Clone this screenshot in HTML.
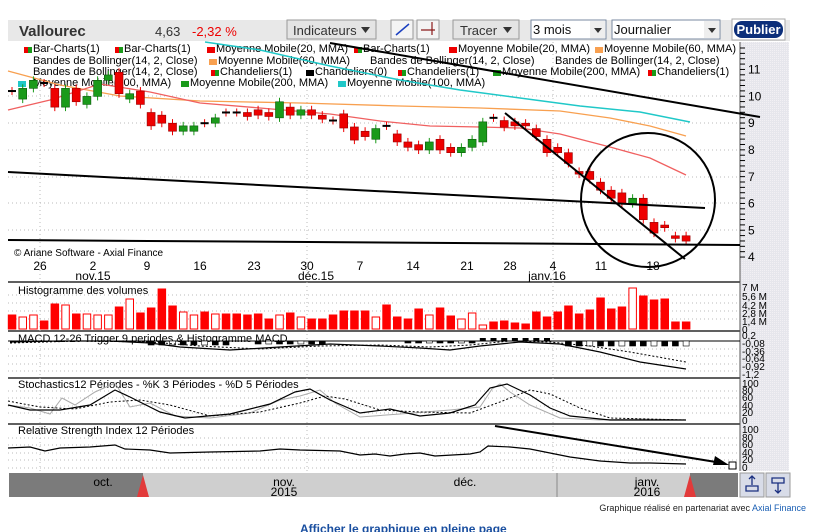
<!DOCTYPE html>
<html><head><meta charset="utf-8"><style>
html,body{margin:0;padding:0;background:#fff;width:822px;height:532px;overflow:hidden;font-family:"Liberation Sans",sans-serif}
svg{position:absolute;left:0;top:0}
</style></head><body>
<svg width="822" height="532" viewBox="0 0 822 532" font-family="Liberation Sans, sans-serif">
<defs>
<pattern id="dith" width="2" height="2" patternUnits="userSpaceOnUse"><rect width="2" height="2" fill="#e6e6ec"/><rect width="1" height="1" fill="#f2f0f4"/></pattern>
</defs>
<rect x="8" y="20" width="782" height="21" fill="#e8e8e8"/>
<text x="19" y="36" font-size="15" font-weight="bold" fill="#333">Vallourec</text>
<text x="155" y="36" font-size="13" fill="#333">4,63</text>
<text x="192" y="36" font-size="13" fill="#e00">-2,32 %</text>
<rect x="287" y="20" width="89" height="19" fill="#e4e4e4" stroke="#999"/>
<text x="293" y="35" font-size="13" fill="#333">Indicateurs</text>
<path d="M361 27h9l-4.5 6z" fill="#333"/>
<rect x="391" y="20" width="22" height="19" fill="#f4f4f4" stroke="#999"/>
<path d="M396 35l13-11" stroke="#1a3fc0" stroke-width="1.5"/>
<rect x="417" y="20" width="22" height="19" fill="#f4f4f4" stroke="#999"/>
<path d="M421 30h14M432 22v13" stroke="#8b1a1a" stroke-width="1.2"/>
<rect x="453" y="20" width="66" height="19" fill="#e4e4e4" stroke="#999"/>
<text x="460" y="35" font-size="13" fill="#333">Tracer</text>
<path d="M503 27h9l-4.5 6z" fill="#333"/>
<rect x="531" y="20" width="75" height="19" fill="#fff" stroke="#7a8aa0"/>
<text x="533" y="34" font-size="13" fill="#111">3 mois</text>
<rect x="590" y="21" width="15" height="17" fill="#eee"/>
<path d="M594 28h8l-4 5z" fill="#333"/>
<rect x="612" y="20" width="108" height="19" fill="#fff" stroke="#7a8aa0"/>
<text x="614" y="34" font-size="13" fill="#111">Journalier</text>
<rect x="704" y="21" width="15" height="17" fill="#eee"/>
<path d="M708 28h8l-4 5z" fill="#333"/>
<rect x="732" y="19" width="53" height="21" fill="#fff" stroke="#aaa"/>
<rect x="734" y="21" width="49" height="17" rx="8" fill="#0c2f7a"/>
<text x="758.5" y="34" font-size="13" font-weight="bold" fill="#fff" text-anchor="middle">Publier</text>

<rect x="740" y="42" width="49" height="429" fill="url(#dith)"/>
<g stroke="#000" stroke-width="1.3">
<line x1="8" y1="282" x2="740" y2="282"/>
<line x1="8" y1="331" x2="740" y2="331"/>
<line x1="8" y1="378" x2="740" y2="378"/>
<line x1="8" y1="424" x2="740" y2="424"/>
</g>
<line x1="740" y1="42" x2="740" y2="471" stroke="#555"/>
<g id="grid" stroke="#bbb" stroke-dasharray="1 3"></g>

<g font-size="11" fill="#000">
<text x="33" y="52">Bar-Charts(1)</text><text x="124" y="52">Bar-Charts(1)</text><text x="216" y="52">Moyenne Mobile(20, MMA)</text><text x="363" y="52">Bar-Charts(1)</text><text x="458" y="52">Moyenne Mobile(20, MMA)</text><text x="604" y="52">Moyenne Mobile(60, MMA)</text>
<text x="33" y="64">Bandes de Bollinger(14, 2, Close)</text><text x="218" y="64">Moyenne Mobile(60, MMA)</text><text x="370" y="64">Bandes de Bollinger(14, 2, Close)</text><text x="555" y="64">Bandes de Bollinger(14, 2, Close)</text>
<text x="33" y="75">Bandes de Bollinger(14, 2, Close)</text><text x="220" y="75">Chandeliers(1)</text><text x="315" y="75">Chandeliers(0)</text><text x="407" y="75">Chandeliers(1)</text><text x="502" y="75">Moyenne Mobile(200, MMA)</text><text x="657" y="75">Chandeliers(1)</text>
<text x="33" y="86">Moyenne Mobile(100, MMA)</text><text x="190" y="86">Moyenne Mobile(200, MMA)</text><text x="347" y="86">Moyenne Mobile(100, MMA)</text>
</g>
<g id="legsw"></g>

<polyline fill="none" stroke="#20c8c8" stroke-width="1.5" points="205,42 260,50 330,66 400,80 460,90 520,98 580,106 640,112 690,122"/>
<polyline fill="none" stroke="#f8a050" stroke-width="1.3" points="8,71 60,85 120,96 200,101 300,103 400,106 480,108 560,111 610,118 650,126 686,136"/>
<polyline fill="none" stroke="#f06060" stroke-width="1.3" points="8,110 50,100 100,84 150,92 200,103 260,108 330,114 380,121 430,126 480,127 520,128 560,134 610,147 650,158 686,175"/>
<g id="candles"></g>
<g stroke="#000" stroke-width="2" fill="none">
<line x1="330" y1="43" x2="760" y2="117"/>
<line x1="8" y1="172" x2="705" y2="208"/>
<line x1="8" y1="240" x2="740" y2="245"/>
<line x1="505" y1="113" x2="685" y2="259"/>
<circle cx="648" cy="200" r="67"/>
</g>
<g font-size="12" fill="#000" id="pax"></g>
<text x="14" y="256" font-size="10" fill="#000">© Ariane Software - Axial Finance</text>
<g font-size="12" fill="#000" text-anchor="middle">
<text x="40" y="270">26</text><text x="93" y="270">2</text><text x="147" y="270">9</text><text x="200" y="270">16</text><text x="254" y="270">23</text><text x="307" y="270">30</text><text x="360" y="270">7</text><text x="413" y="270">14</text><text x="467" y="270">21</text><text x="510" y="270">28</text><text x="553" y="270">4</text><text x="601" y="270">11</text><text x="653" y="270">18</text>
<text x="93" y="280">nov.15</text><text x="316" y="280">déc.15</text><text x="547" y="280">janv.16</text>
</g>
<text x="18" y="294" font-size="11">Histogramme des volumes</text>
<g id="vol"></g>
<g font-size="10" fill="#000"><text x="742" y="291">7 M</text><text x="742" y="300">5,6 M</text><text x="742" y="309">4,2 M</text><text x="742" y="317">2,8 M</text><text x="742" y="325">1,4 M</text><text x="742" y="333">0</text></g>
<text x="18" y="342" font-size="11">MACD 12-26   Trigger 9 periodes &amp; Histogramme MACD</text>
<line x1="8" y1="341" x2="740" y2="341" stroke="#000"/>
<g id="macdh"></g>
<polyline fill="none" stroke="#000" stroke-width="1.2" points="10,342 60,341 110,341 150,343 180,347 230,350 280,347 330,344 380,346 420,348 450,350 480,346 520,342 560,344 600,352 640,362 686,369"/>
<polyline fill="none" stroke="#000" stroke-dasharray="2 2" points="10,343 80,341 150,342 200,346 260,349 320,346 380,345 430,347 470,345 510,341 550,342 590,346 630,352 686,362"/>
<g font-size="10"><text x="742" y="339">0,2</text><text x="742" y="347">-0,08</text><text x="742" y="355">-0,36</text><text x="742" y="362">-0,64</text><text x="742" y="370">-0,92</text><text x="742" y="378">-1,2</text></g>
<text x="18" y="388" font-size="11">Stochastics12 Périodes  -  %K 3 Périodes  -  %D 5 Périodes</text>
<polyline fill="none" stroke="#aaa" points="8,405 30,408 50,414 62,398 75,405 95,392 115,383 130,407 150,403 175,416 210,418 250,413 280,400 300,396 320,390 335,403 360,417 400,414 450,410 480,407 492,389 500,384 510,392 530,405 560,418 600,420 640,419 686,420"/>
<polyline fill="none" stroke="#000" stroke-width="1.2" points="8,405 30,410 60,410 90,405 115,390 130,397 160,412 185,418 230,414 270,404 295,392 310,389 330,400 360,413 390,409 420,416 450,413 475,405 490,388 507,384 530,395 550,408 570,416 610,420 686,420"/>
<polyline fill="none" stroke="#000" stroke-dasharray="2 2" points="8,401 40,407 75,409 110,402 140,400 170,405 210,416 260,412 300,403 325,396 345,399 380,410 420,412 470,413 500,402 530,390 550,394 580,408 610,418 686,420"/>
<g font-size="10"><text x="742" y="387">100</text><text x="742" y="394">80</text><text x="742" y="401">60</text><text x="742" y="409">40</text><text x="742" y="416">20</text><text x="742" y="424">0</text></g>
<text x="18" y="434" font-size="11">Relative Strength Index 12 Périodes</text>
<polyline fill="none" stroke="#000" stroke-width="1.2" points="8,448 30,447 45,451 60,448 90,447 115,445 125,449 150,450 170,453 210,452 260,451 280,449 300,450 340,451 360,455 375,454 390,456 405,454 420,453 435,456 470,454 480,452 488,446 510,447 530,449 550,453 570,457 600,461 630,463 650,463 686,464"/>
<line x1="495" y1="426" x2="722" y2="463" stroke="#000" stroke-width="2"/>
<path d="M729 465l-14-9-2 9z" fill="#000"/>
<rect x="729" y="462" width="7" height="7" fill="#fff" stroke="#000"/>
<g font-size="10"><text x="742" y="433">100</text><text x="742" y="441">80</text><text x="742" y="448">60</text><text x="742" y="456">40</text><text x="742" y="463">20</text><text x="742" y="471">0</text></g>
<rect x="9" y="473" width="729" height="24" fill="#cfcfcf"/>
<rect x="9" y="473" width="134" height="24" fill="#7b7b7b"/>
<rect x="690" y="473" width="48" height="24" fill="#7b7b7b"/>
<path d="M137 497l6-22 6 22z" fill="#e23a3a"/>
<path d="M684 497l6-22 6 22z" fill="#e23a3a"/>
<line x1="557" y1="473" x2="557" y2="497" stroke="#888"/>
<g font-size="12" fill="#000" text-anchor="middle">
<text x="103" y="486">oct.</text><text x="284" y="486">nov.</text><text x="284" y="496">2015</text><text x="465" y="486">déc.</text><text x="647" y="486">janv.</text><text x="647" y="496">2016</text>
</g>
<rect x="740" y="473" width="24" height="24" fill="#d8dce8" stroke="#999"/>
<rect x="766" y="473" width="24" height="24" fill="#d8dce8" stroke="#999"/>
<path d="M746 486h12v5h-12zM752 476v9M749 479l3-3 3 3" fill="none" stroke="#1a2f80" stroke-width="1.3"/>
<path d="M772 478h12v5h-12zM778 483v10M775 490l3 3 3-3" fill="none" stroke="#1a2f80" stroke-width="1.3"/>
<text x="806" y="511" font-size="9" text-anchor="end" fill="#222">Graphique réalisé en partenariat avec <tspan fill="#1a5fb4">Axial Finance</tspan></text>
<text x="300" y="533" font-size="12" font-weight="bold" fill="#1a4fa0">Afficher le graphique en pleine page</text>
</svg>
<script>
const NS="http://www.w3.org/2000/svg";
function el(p,t,a){const e=document.createElementNS(NS,t);for(const k in a)e.setAttribute(k,a[k]);document.getElementById(p).appendChild(e);return e;}
const Y=p=>69.6+(11-p)*26.8;
[96,123,150,177,203,230].forEach(y=>el('grid','line',{x1:8,y1:y,x2:740,y2:y}));
[295,303,311,319].forEach(y=>el('grid','line',{x1:8,y1:y,x2:740,y2:y}));
[349,356,364,371].forEach(y=>el('grid','line',{x1:8,y1:y,x2:740,y2:y}));
[391,398,406,413].forEach(y=>el('grid','line',{x1:8,y1:y,x2:740,y2:y}));
[438,445,453,460,468].forEach(y=>el('grid','line',{x1:8,y1:y,x2:740,y2:y}));
[40,307,553].forEach(x=>el('grid','line',{x1:x,y1:42,x2:x,y2:471}));
for(let p=4;p<=11;p++){const t=el('pax','text',{x:748,y:Y(p)+4});t.textContent=p;}
for(let y=48;y<258;y+=5.36)el('pax','line',{x1:740,y1:y,x2:745,y2:y,stroke:'#000'});
const sw=[[24,48,'rg'],[115,48,'rg'],[207,48,'r'],[354,48,'rg'],[449,48,'r'],[595,48,'o'],[209,60,'o'],[211,71,'rg'],[306,71,'k'],[398,71,'rg'],[493,71,'g'],[648,71,'rg'],[18,82,'c'],[181,82,'g'],[338,82,'c']];
const cm={r:['#e00','#e00'],rg:['#e00','#1a9a1a'],o:['#f8a050','#f8a050'],k:['#000','#000'],g:['#1a9a1a','#1a9a1a'],c:['#20c8c8','#20c8c8']};
sw.forEach(([x,y,c])=>{el('legsw','rect',{x:x,y:y-1,width:4,height:6,fill:cm[c][0]});el('legsw','rect',{x:x+4,y:y-1,width:4,height:6,fill:cm[c][1]});});
const C=[[10.2,10.2],[9.9,10.3],[10.3,10.6],[10.5,10.5],[10.3,9.6],[9.6,10.3],[10.3,9.8],[9.7,10.0],[10.0,10.6],[10.6,10.8],[10.9,10.1],[9.9,10.1],[10.2,9.7],[9.4,8.9],[9.3,9.0],[9.0,8.7],[8.7,8.9],[8.7,8.9],[9.0,9.0],[9.0,9.2],[9.4,9.4],[9.4,9.4],[9.4,9.25],[9.5,9.3],[9.4,9.25],[9.2,9.8],[9.6,9.3],[9.3,9.5],[9.5,9.3],[9.3,9.15],[9.1,9.1],[9.35,8.82],[8.86,8.37],[8.7,8.5],[8.4,8.8],[8.9,8.9],[8.6,8.3],[8.3,8.1],[8.2,8.0],[8.0,8.3],[8.4,8.0],[8.1,7.9],[7.9,8.1],[8.1,8.4],[8.3,9.05],[9.2,9.2],[9.1,8.85],[9.05,8.9],[9.0,8.9],[8.8,8.5],[8.4,7.9],[8.1,7.9],[7.9,7.5],[7.2,7.1],[7.2,6.9],[6.8,6.5],[6.5,6.2],[6.4,6.0],[6.0,6.2],[6.2,5.4],[5.3,4.9],[5.2,5.1],[4.8,4.7],[4.8,4.6]];
const V=[14,12,14,8,25,24,15,15,14,14,22,30,16,21,40,23,17,14,17,15,15,15,14,15,10,14,16,12,10,10,14,18,18,18,12,24,12,10,20,14,21,13,10,16,4,7,8,6,5,17,12,17,23,15,19,31,20,22,41,33,29,30,7,7];
C.forEach(([o,c],i)=>{
 const x=12+i*10.7;const up=c>o;const col=up?'#1a9a1a':'#e00';
 const hi=Math.max(o,c)+0.15,lo=Math.min(o,c)-0.15;
 el('candles','line',{x1:x,y1:Y(hi),x2:x,y2:Y(lo),stroke:col});
 const t=Y(Math.max(o,c)),b=Y(Math.min(o,c));
 if(b-t<2) el('candles','rect',{x:x-4,y:t-1,width:8,height:2,fill:'#000'});
 else el('candles','rect',{x:x-4,y:t,width:8,height:b-t,fill:col,stroke:up?'#0a5a0a':'#900','stroke-width':0.6});
 const h=V[i];const red=!up;
 el('vol','rect',{x:x-3.7,y:329-h,width:7.5,height:h,fill:red?'#f00':'#fff',stroke:'#f00','stroke-width':1});
});
for(let i=0;i<64;i++){const x=12+i*10.7;let h=0;
 if(i>=23&&i<=29)h=3; if(i>=37&&i<=43)h=2; if(i>=44&&i<=50){h=-3;} if(i>=52)h=5;
 if(i>=13&&i<=20)h=4;
 if(h>0)el('macdh','rect',{x:x-3,y:341,width:6,height:h,fill:(i%3==0)?'#fff':'#000',stroke:'#000','stroke-width':0.6});
 if(h<0)el('macdh','rect',{x:x-3,y:338,width:6,height:3,fill:'#000'});
}
</script>
</body></html>
